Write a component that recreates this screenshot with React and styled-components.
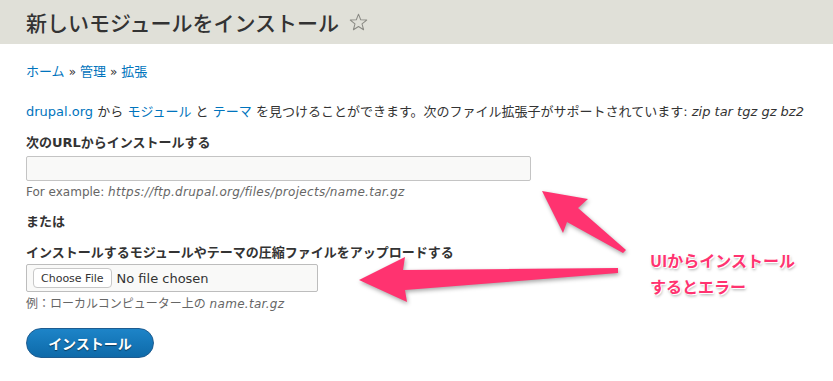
import React from 'react';
import styled, { createGlobalStyle } from 'styled-components';

const GlobalStyle = createGlobalStyle`
  html, body {
    margin: 0;
    padding: 0;
    background: #fff;
  }
  body {
    font-family: "DejaVu Sans", "Noto Sans CJK JP", sans-serif;
    color: #333;
  }
`;

const Page = styled.div`
  position: relative;
  width: 833px;
  height: 381px;
  overflow: hidden;
`;

const Header = styled.header`
  height: 44px;
  background: #e0e0d8;
  display: flex;
  align-items: center;
  padding-left: 26px;
  gap: 10px;
`;

const Title = styled.h1`
  margin: 0;
  font-family: "Noto Sans CJK JP", sans-serif;
  font-size: 21px;
  font-weight: 500;
  color: #333;
`;

const Content = styled.main`
  padding: 0 26px;
  font-size: 13px;
`;

const Breadcrumb = styled.nav`
  margin-top: 19px;
  line-height: 18px;
  color: #333;
`;

const A = styled.a`
  color: #0074bd;
  text-decoration: none;
`;

const Sep = styled.span`
  margin: 0 4px;
  font-size: 12px;
`;

const Para = styled.p`
  margin: 22px 0 0;
  line-height: 18px;
  white-space: nowrap;
`;

const Em = styled.em`
  font-style: italic;
  letter-spacing: ${p => p.$spread || 0}px;
`;

const Label = styled.div`
  margin-top: 13px;
  line-height: 18px;
  font-weight: bold;
`;

const TextInput = styled.div`
  margin-top: 4px;
  width: 505px;
  height: 25px;
  box-sizing: border-box;
  border: 1px solid #c4c4c4;
  border-radius: 2px;
  background: #f9f9f8;
`;

const Hint = styled.div`
  margin-top: ${p => p.$top || 3}px;
  line-height: 16px;
  font-size: 12px;
  color: #666;
`;

const FileBox = styled.div`
  margin-top: 2px;
  width: 292px;
  height: 28px;
  box-sizing: border-box;
  border: 1px solid #bdbdbd;
  border-radius: 2px;
  background: #f9f9f8;
  display: flex;
  align-items: center;
  padding-left: 6px;
  gap: 5px;
`;

const ChooseButton = styled.span`
  display: inline-flex;
  align-items: center;
  height: 18px;
  padding: 0 7px;
  border: 1px solid #c8c8c8;
  border-radius: 4px;
  background: #fff;
  font-size: 11px;
  color: #333;
`;

const NoFile = styled.span`
  font-size: 13px;
  color: #333;
`;

const InstallButton = styled.button`
  margin-top: 16px;
  width: 128px;
  height: 30px;
  border-radius: 15px;
  border: 1px solid #1e5c90;
  background: linear-gradient(#1d84c8, #0e6aa9);
  color: #fff;
  font-family: "Noto Sans CJK JP", sans-serif;
  font-size: 14px;
  font-weight: bold;
  text-shadow: 0 1px 1px rgba(0, 0, 0, 0.5);
  display: block;
`;

const Overlay = styled.svg`
  position: absolute;
  left: 0;
  top: 0;
  width: 833px;
  height: 381px;
  pointer-events: none;
  filter: drop-shadow(1px 2px 2px rgba(0, 0, 0, 0.35));
`;

const Note = styled.div`
  position: absolute;
  left: 650px;
  top: 247px;
  font-family: "Noto Sans CJK JP", sans-serif;
  font-weight: bold;
  font-size: 16px;
  line-height: 26px;
  color: #ff3370;
  text-shadow: 0 0 2px #fff, 1px 1px 0 #fff, -1px -1px 0 #fff, 1px 2px 3px rgba(0, 0, 0, 0.35);
`;

const Star = () => (
  <svg width="19" height="18" viewBox="0 0 24 23">
    <path
      d="M12 1.5 L14.8 8.6 L22.5 9 L16.5 13.9 L18.5 21.4 L12 17.2 L5.5 21.4 L7.5 13.9 L1.5 9 L9.2 8.6 Z"
      fill="none"
      stroke="#8a8a84"
      strokeWidth="1.3"
      strokeLinejoin="round"
    />
  </svg>
);

export default function App() {
  return (
    <Page>
      <GlobalStyle />
      <Header>
        <Title>新しいモジュールをインストール</Title>
        <Star />
      </Header>
      <Content>
        <Breadcrumb>
          <A href="#">ホーム</A><Sep>»</Sep><A href="#">管理</A><Sep>»</Sep><A href="#">拡張</A>
        </Breadcrumb>
        <Para>
          <A href="#">drupal.org</A> から <A href="#">モジュール</A> と <A href="#">テーマ</A> を見つけることができます。次のファイル拡張子がサポートされています: <Em>zip tar tgz gz bz2</Em>
        </Para>
        <Label>次のURLからインストールする</Label>
        <TextInput />
        <Hint>For example: <Em $spread={0.3}>https://ftp.drupal.org/files/projects/name.tar.gz</Em></Hint>
        <Label>または</Label>
        <Label>インストールするモジュールやテーマの圧縮ファイルをアップロードする</Label>
        <FileBox>
          <ChooseButton>Choose File</ChooseButton>
          <NoFile>No file chosen</NoFile>
        </FileBox>
        <Hint $top={4}>例：ローカルコンピューター上の <Em $spread={0.3}>name.tar.gz</Em></Hint>
        <InstallButton>インストール</InstallButton>
      </Content>
      <Overlay viewBox="0 0 833 381">
        <polygon
          fill="#ff3370"
          points="542,191 588,199 578,208 626,250 623,253 567,222 563,233"
        />
        <polygon
          fill="#ff3370"
          points="359,280 405,257 403,270 618,268 618,273 405,290 407,302"
        />
      </Overlay>
      <Note>
        UIからインストール<br />するとエラー
      </Note>
    </Page>
  );
}
